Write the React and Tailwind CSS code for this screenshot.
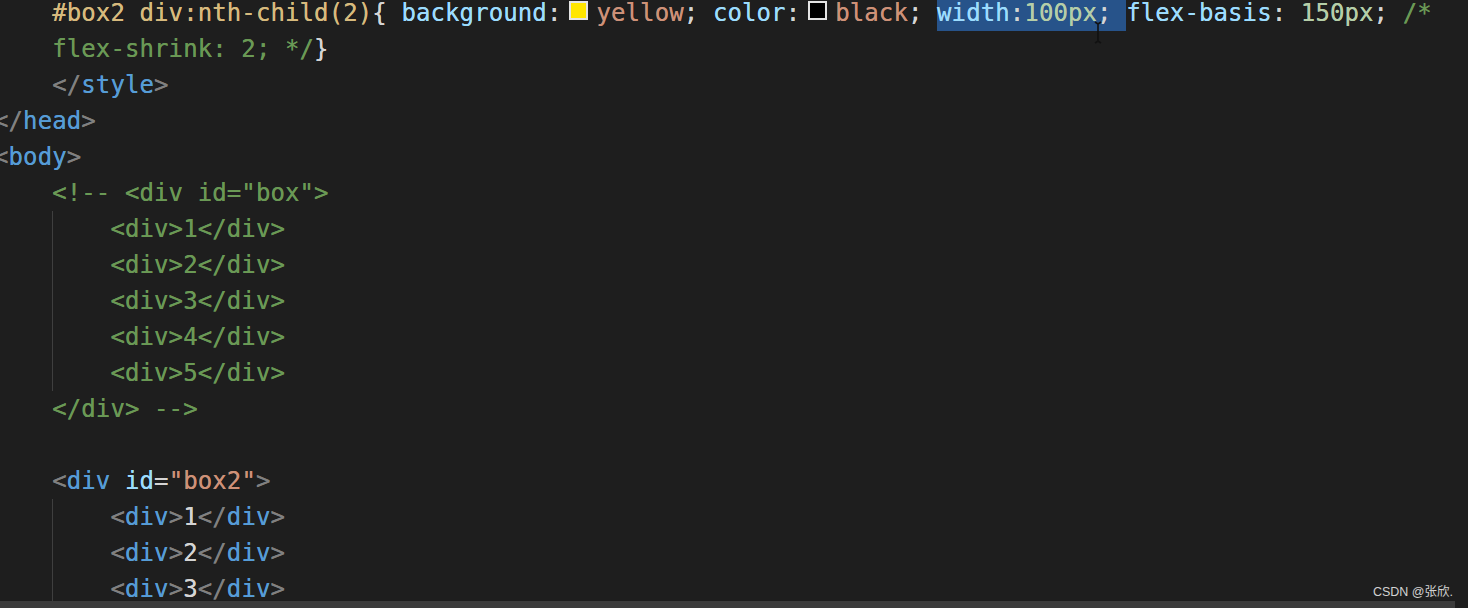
import React from "react";

const C = {
  sel: "text-[#d7ba7d]",
  prop: "text-[#9cdcfe]",
  str: "text-[#ce9178]",
  num: "text-[#b5cea8]",
  com: "text-[#6a9955]",
  tag: "text-[#569cd6]",
  pun: "text-[#808080]",
  txt: "text-[#d4d4d4]",
};

function T({ c, children }) {
  return <span className={c}>{children}</span>;
}

function Guide() {
  return (
    <span className="inline-block h-[36px] align-top shadow-[inset_1px_0_0_#3f3f3f]">{"    "}</span>
  );
}

function Swatch({ color }) {
  return (
    <span
      className={`inline-block align-top mt-[6px] ml-[8px] mr-[8px] w-[19px] h-[19px] border-2 border-[#e4e4e4] ${color}`}
    />
  );
}

function Line({ children }) {
  return <div className="h-[36px] leading-[36px] whitespace-pre">{children}</div>;
}

function Child({ n, comment }) {
  if (comment) {
    return (
      <Line>
        {"    "}
        <Guide />
        <T c={C.com}>{`<div>${n}</div>`}</T>
      </Line>
    );
  }
  return (
    <Line>
      {"    "}
      <Guide />
      <T c={C.pun}>{"<"}</T>
      <T c={C.tag}>div</T>
      <T c={C.pun}>{">"}</T>
      <T c={C.txt}>{n}</T>
      <T c={C.pun}>{"</"}</T>
      <T c={C.tag}>div</T>
      <T c={C.pun}>{">"}</T>
    </Line>
  );
}

export default function App() {
  return (
    <div className="relative w-[1468px] h-[608px] overflow-hidden bg-[#1e1e1e]">
      <div
        className="flex flex-col mt-[-5px] ml-[-6px] text-[24px] tracking-[0.1px] text-[#d4d4d4] [text-shadow:0_0_0.5px_currentColor]"
        style={{ fontFamily: '"DejaVu Sans Mono", "Liberation Mono", monospace' }}
      >
        <Line>
          {"    "}
          <T c={C.sel}>#box2 div:nth-child(2)</T>
          <T c={C.txt}>{"{ "}</T>
          <T c={C.prop}>background</T>
          <T c={C.txt}>:</T>
          <Swatch color="bg-[#ffe600]" />
          <T c={C.str}>yellow</T>
          <T c={C.txt}>{"; "}</T>
          <T c={C.prop}>color</T>
          <T c={C.txt}>:</T>
          <Swatch color="bg-black" />
          <T c={C.str}>black</T>
          <T c={C.txt}>{"; "}</T>
          <span className="inline-block h-[36px] align-top bg-[#27538a]">
            <T c={C.prop}>width</T>
            <T c={C.txt}>:</T>
            <T c={C.num}>100px</T>
            <T c={C.txt}>{"; "}</T>
          </span>
          <T c={C.prop}>flex-basis</T>
          <T c={C.txt}>{": "}</T>
          <T c={C.num}>150px</T>
          <T c={C.txt}>{"; "}</T>
          <T c={C.com}>{"/*"}</T>
        </Line>
        <Line>
          {"    "}
          <T c={C.com}>{"flex-shrink: 2; */"}</T>
          <T c={C.txt}>{"}"}</T>
        </Line>
        <Line>
          {"    "}
          <T c={C.pun}>{"</"}</T>
          <T c={C.tag}>style</T>
          <T c={C.pun}>{">"}</T>
        </Line>
        <Line>
          <T c={C.pun}>{"</"}</T>
          <T c={C.tag}>head</T>
          <T c={C.pun}>{">"}</T>
        </Line>
        <Line>
          <T c={C.pun}>{"<"}</T>
          <T c={C.tag}>body</T>
          <T c={C.pun}>{">"}</T>
        </Line>
        <Line>
          {"    "}
          <T c={C.com}>{'<!-- <div id="box">'}</T>
        </Line>
        <Child n="1" comment />
        <Child n="2" comment />
        <Child n="3" comment />
        <Child n="4" comment />
        <Child n="5" comment />
        <Line>
          {"    "}
          <T c={C.com}>{"</div> -->"}</T>
        </Line>
        <Line>{" "}</Line>
        <Line>
          {"    "}
          <T c={C.pun}>{"<"}</T>
          <T c={C.tag}>div</T>
          <T c={C.txt}> </T>
          <T c={C.prop}>id</T>
          <T c={C.txt}>=</T>
          <T c={C.str}>"box2"</T>
          <T c={C.pun}>{">"}</T>
        </Line>
        <Child n="1" />
        <Child n="2" />
        <Child n="3" />
      </div>

      {/* mouse I-beam cursor */}
      <svg className="absolute left-[1093px] top-[21px]" width="10" height="23" viewBox="0 0 10 23">
        <path d="M2 1 L5 3 L8 1 M5 3 V20 M2 22 L5 20 L8 22" stroke="#111" strokeWidth="1.6" fill="none" />
      </svg>

      {/* horizontal scrollbar */}
      <div className="absolute left-0 bottom-0 w-[1455px] h-[7px] bg-[#3c3c3c]" />

      {/* watermark */}
      <div
        className="absolute right-[15px] bottom-[10px] text-[12.5px] leading-none text-[#d2d2d2]"
        style={{ fontFamily: '"Liberation Sans", "Noto Sans CJK SC", sans-serif' }}
      >
        CSDN @张欣.
      </div>
    </div>
  );
}
